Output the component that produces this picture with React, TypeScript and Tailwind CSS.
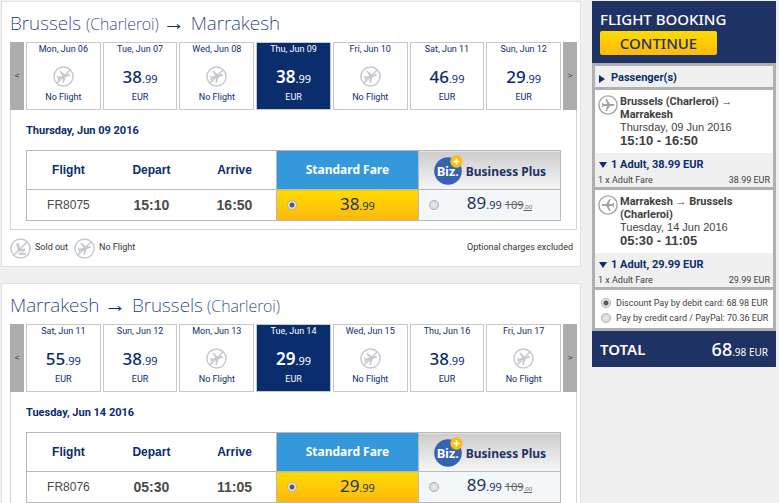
import React, { useState } from 'react';

type Day = { date: string; price?: string };

type Leg = {
    id: string;
    from: string;
    fromNote?: string;
    to: string;
    toNote?: string;
    heading: string;
    days: Day[];
    selected: number;
    flight: string;
    depart: string;
    arrive: string;
    fare: string;
};

const legs: Leg[] = [
    {
        id: 'out',
        from: 'Brussels',
        fromNote: '(Charleroi)',
        to: 'Marrakesh',
        heading: 'Thursday, Jun 09 2016',
        days: [
            { date: 'Mon, Jun 06' },
            { date: 'Tue, Jun 07', price: '38' },
            { date: 'Wed, Jun 08' },
            { date: 'Thu, Jun 09', price: '38' },
            { date: 'Fri, Jun 10' },
            { date: 'Sat, Jun 11', price: '46' },
            { date: 'Sun, Jun 12', price: '29' },
        ],
        selected: 3,
        flight: 'FR8075',
        depart: '15:10',
        arrive: '16:50',
        fare: '38',
    },
    {
        id: 'back',
        from: 'Marrakesh',
        to: 'Brussels',
        toNote: '(Charleroi)',
        heading: 'Tuesday, Jun 14 2016',
        days: [
            { date: 'Sat, Jun 11', price: '55' },
            { date: 'Sun, Jun 12', price: '38' },
            { date: 'Mon, Jun 13' },
            { date: 'Tue, Jun 14', price: '29' },
            { date: 'Wed, Jun 15' },
            { date: 'Thu, Jun 16', price: '38' },
            { date: 'Fri, Jun 17' },
        ],
        selected: 3,
        flight: 'FR8076',
        depart: '05:30',
        arrive: '11:05',
        fare: '29',
    },
];

const PLANE =
    'M21 16v-2l-8-5V3.5c0-.83-.67-1.5-1.5-1.5S10 2.67 10 3.5V9l-8 5v2l8-2.5V19l-2 1.5V22l3.5-1 3.5 1v-1.5L13 19v-5.5l8 2.5z';

function PlaneIcon({ angle, slash, className }: { angle: number; slash?: boolean; className: string }) {
    return (
        <svg viewBox="0 0 32 32" className={className} fill="none" stroke="currentColor" aria-hidden="true">
            <circle cx="16" cy="16" r="14.6" strokeWidth="2.2" />
            <g transform={`rotate(${angle} 16 16) translate(4.5 4)`}>
                <path d={PLANE} fill="currentColor" stroke="none" />
            </g>
            {slash && <path d="M26 6 6 26" strokeWidth="2.2" />}
        </svg>
    );
}

function SeatIcon({ className }: { className: string }) {
    return (
        <svg viewBox="0 0 32 32" className={className} fill="none" stroke="currentColor" aria-hidden="true">
            <circle cx="16" cy="16" r="14.6" strokeWidth="2.2" />
            <path d="M11 8l3 10.5h9" strokeWidth="4" strokeLinejoin="round" />
            <path d="M13 24h11" strokeWidth="3" />
            <path d="M26 6 6 26" strokeWidth="2.2" />
        </svg>
    );
}

function BizLogo() {
    return (
        <svg viewBox="0 0 30 30" className="size-[30px] shrink-0" role="img" aria-label="Biz.">
            <circle cx="15" cy="16" r="13.8" fill="#3563b0" />
            <text x="4" y="21" fontSize="13" fontWeight="700" fill="#fff" fontFamily="Roboto, sans-serif">
                Biz.
            </text>
            <circle cx="23.5" cy="6.5" r="6.2" fill="#fbbf12" />
            <path d="M23.5 3.5v6M20.5 6.5h6" stroke="#fff" strokeWidth="1.6" />
        </svg>
    );
}

function Radio(props: React.InputHTMLAttributes<HTMLInputElement>) {
    return (
        <input
            type="radio"
            className="size-[10px] shrink-0 appearance-none rounded-full border border-[#b0b0b0] bg-[radial-gradient(circle,#e8e8e8,#d6d6d6)] checked:bg-[radial-gradient(circle,#5a5a5a_0_2px,#e6e6e6_3px)]"
            {...props}
        />
    );
}

function CalendarArrow({ label, children }: { label: string; children: string }) {
    return (
        <button aria-label={label} className="w-[14px] shrink-0 bg-[#adadad] text-[8px] text-[#0a2d6e]">
            {children}
        </button>
    );
}

function DayCell({ day, active, onClick }: { day: Day; active: boolean; onClick: () => void }) {
    return (
        <button
            onClick={onClick}
            aria-pressed={active}
            className={`flex h-[68px] min-w-0 flex-1 flex-col items-center border border-[#c8c8c8] font-['Roboto'] text-[9px] leading-3 ${
                active ? 'bg-[#0a2d6e] text-white' : 'bg-white text-[#0a2d6e]'
            }`}
        >
            <span>{day.date}</span>
            {day.price ? (
                <span className={`flex flex-1 items-end font-['Noto_Sans'] text-[17px] leading-6 ${active ? 'font-semibold' : 'font-medium'}`}>
                    <span>
                        {day.price}
                        <span className="text-[11px] font-normal">.99</span>
                    </span>
                </span>
            ) : (
                <span className="flex flex-1 items-end pb-1">
                    <PlaneIcon angle={75} slash className="size-[21px] text-[#c6c8d0]" />
                </span>
            )}
            <span className="pb-[6px]">{day.price ? 'EUR' : 'No Flight'}</span>
        </button>
    );
}

function FlightLeg({ leg }: { leg: Leg }) {
    const [selected, setSelected] = useState(leg.selected);

    return (
        <section className="border border-[#e2e2e2] bg-white pt-2 pr-[3px] pl-2">
            <h2 className="h-8 font-['Noto_Sans'] text-[19px] leading-6 font-extralight text-[#0a2d6e]">
                {leg.from} {leg.fromNote && <small className="text-[16px]">{leg.fromNote} </small>}
                <span className="text-[22px] leading-none">→ </span>
                {leg.to}
                {leg.toNote && <small className="text-[16px]"> {leg.toNote}</small>}
            </h2>

            <div className="border-x border-b border-[#d4d4d4]">
                <div className="-mx-px flex gap-[2px]">
                    <CalendarArrow label="Earlier dates">&lt;</CalendarArrow>
                    {leg.days.map((day, i) => (
                        <DayCell key={day.date} day={day} active={i === selected} onClick={() => setSelected(i)} />
                    ))}
                    <CalendarArrow label="Later dates">&gt;</CalendarArrow>
                </div>

                <div className="px-[15px] pt-[13px] pb-2">
                    <h3 className="mb-[11px] font-['Roboto'] text-[11px] leading-4 font-bold text-[#0a2d6e]">{leg.heading}</h3>
                    <table className="w-full table-fixed border-collapse border border-[#b9b9b9] text-center">
                        <colgroup>
                            <col className="w-[15.6%]" />
                            <col className="w-[15.6%]" />
                            <col className="w-[15.6%]" />
                            <col />
                            <col />
                        </colgroup>
                        <thead>
                            <tr className="h-[39px] border-b border-[#b9b9b9] text-[12px] text-[#0a2d6e]">
                                <th>Flight</th>
                                <th>Depart</th>
                                <th>Arrive</th>
                                <th className="border-x border-[#b9b9b9] bg-[#3498db] font-['Noto_Sans'] text-white">Standard Fare</th>
                                <th className="bg-linear-to-b from-[#cdcdcd] to-[#f6f6f6] font-['Noto_Sans'] text-[#1e3264]">
                                    <span className="flex items-center justify-center gap-[3px]">
                                        <BizLogo />
                                        <span className="pt-1">Business Plus</span>
                                    </span>
                                </th>
                            </tr>
                        </thead>
                        <tbody>
                            <tr className="h-[31px] text-[14px] text-[#4a4a4a]">
                                <td className="text-[12px]">{leg.flight}</td>
                                <td className="font-bold">{leg.depart}</td>
                                <td className="font-bold">{leg.arrive}</td>
                                <td className="border-x border-[#b9b9b9] bg-linear-to-b from-[#ffdb00] to-[#fdb80c]">
                                    <label className="flex items-center pl-[10px]">
                                        <Radio name={`fare-${leg.id}`} defaultChecked />
                                        <span className="flex-1 font-['Noto_Sans'] text-[17px] leading-6 text-[#1e3264]">
                                            {leg.fare}
                                            <span className="text-[11px]">.99</span>
                                        </span>
                                    </label>
                                </td>
                                <td className="bg-[#f3f7f9]">
                                    <label className="flex items-center pl-[10px]">
                                        <Radio name={`fare-${leg.id}`} />
                                        <span className="flex-1 font-['Noto_Sans'] text-[17px] leading-6 text-[#1e3264]">
                                            89<span className="text-[11px]">.99 </span>
                                            <s className="text-[11px] text-[#666]">
                                                109<span className="text-[6px]">.00</span>
                                            </s>
                                        </span>
                                    </label>
                                </td>
                            </tr>
                        </tbody>
                    </table>
                </div>
            </div>

            <div className="flex h-9 items-center pr-1 font-['Roboto'] text-[9px] text-[#333]">
                <SeatIcon className="mr-1 size-[21px] text-[#c6c8d0]" />
                Sold out
                <PlaneIcon angle={75} slash className="mr-1 ml-[6px] size-[21px] text-[#c6c8d0]" />
                No Flight
                <span className="ml-auto">Optional charges excluded</span>
            </div>
        </section>
    );
}

function TripSummary({ route, date, times, price, angle }: { route: string; date: string; times: string; price: string; angle: number }) {
    return (
        <section className="bg-[#f0f0f0] font-['Roboto']">
            <div className="flex gap-[2px] bg-white pt-[5px] pr-6 pb-[5px] pl-[3px] text-[#3f3f3f]">
                <PlaneIcon angle={angle} className="size-5 shrink-0 text-[#a3a3a3]" />
                <div>
                    <h3 className="text-[11px] leading-[13px] font-bold">{route}</h3>
                    <p className="font-['Liberation_Sans'] text-[11px] leading-[13px]">{date}</p>
                    <p className="font-['Liberation_Sans'] text-[13px] leading-[14px] font-bold">{times}</p>
                </div>
            </div>
            <button className="flex w-full items-center gap-1 pt-1 pl-1 text-[11px] leading-4 font-bold text-[#0a2d6e]">
                <span className="size-0 border-x-4 border-t-[6px] border-x-transparent border-t-[#0a2d6e]" />1 Adult, {price} EUR
            </button>
            <div className="flex justify-between px-[3px] py-[2px] text-[9px] leading-[10px] text-[#3f3f3f]">
                <span>1 x Adult Fare</span>
                <span>{price} EUR</span>
            </div>
        </section>
    );
}

function BookingSidebar() {
    return (
        <aside className="w-[184px] shrink-0">
            <div className="h-[62px] bg-[#1e3264] px-2 pt-2">
                <h2 className="font-['Noto_Sans'] text-[15px] leading-5 font-medium text-white">FLIGHT BOOKING</h2>
                <button className="mt-[2px] h-6 w-[117px] rounded-xs bg-linear-to-b from-[#ffdb00] to-[#fdb80c] font-['Noto_Sans'] text-[15px] font-medium text-[#1e3264]">
                    CONTINUE
                </button>
            </div>

            <div className="flex flex-col gap-[3px] bg-[#b0b0b0] p-[3px]">
                <button className="flex h-[21px] items-center gap-[6px] bg-[#f0f0f0] pt-1 pl-1 font-['Roboto'] text-[11px] font-bold text-[#0a2d6e]">
                    <span className="size-0 border-y-4 border-l-[6px] border-y-transparent border-l-[#0a2d6e]" />
                    Passenger(s)
                </button>
                <TripSummary route="Brussels (Charleroi) → Marrakesh" date="Thursday, 09 Jun 2016" times="15:10 - 16:50" price="38.99" angle={90} />
                <TripSummary route="Marrakesh → Brussels (Charleroi)" date="Tuesday, 14 Jun 2016" times="05:30 - 11:05" price="29.99" angle={-90} />
                <div className="flex flex-col gap-[3px] bg-white pt-[7px] pb-1 pl-[6px] font-['Roboto'] text-[9px] leading-3 text-[#3f3f3f]">
                    <label className="flex items-center gap-[5px]">
                        <Radio name="payment" defaultChecked />
                        Discount Pay by debit card: 68.98 EUR
                    </label>
                    <label className="flex items-center gap-[5px]">
                        <Radio name="payment" />
                        Pay by credit card / PayPal: 70.36 EUR
                    </label>
                </div>
            </div>

            <div className="flex h-9 items-center justify-between bg-[#1e3264] px-2 font-['Noto_Sans'] text-white">
                <span className="text-[15px] font-semibold">TOTAL</span>
                <span className="text-[18px] font-medium">
                    68<span className="text-[10px] font-normal">.98 EUR</span>
                </span>
            </div>
        </aside>
    );
}

export default function App() {
    return (
        <div className="h-screen overflow-hidden bg-[#f0f0f0] font-['Liberation_Sans',Arial,sans-serif]">
            <div className="flex items-start gap-[11px] py-px pr-[3px] pl-px">
                <main className="flex min-w-0 flex-1 flex-col gap-4">
                    {legs.map((leg) => (
                        <FlightLeg key={leg.id} leg={leg} />
                    ))}
                </main>
                <BookingSidebar />
            </div>
        </div>
    );
}
